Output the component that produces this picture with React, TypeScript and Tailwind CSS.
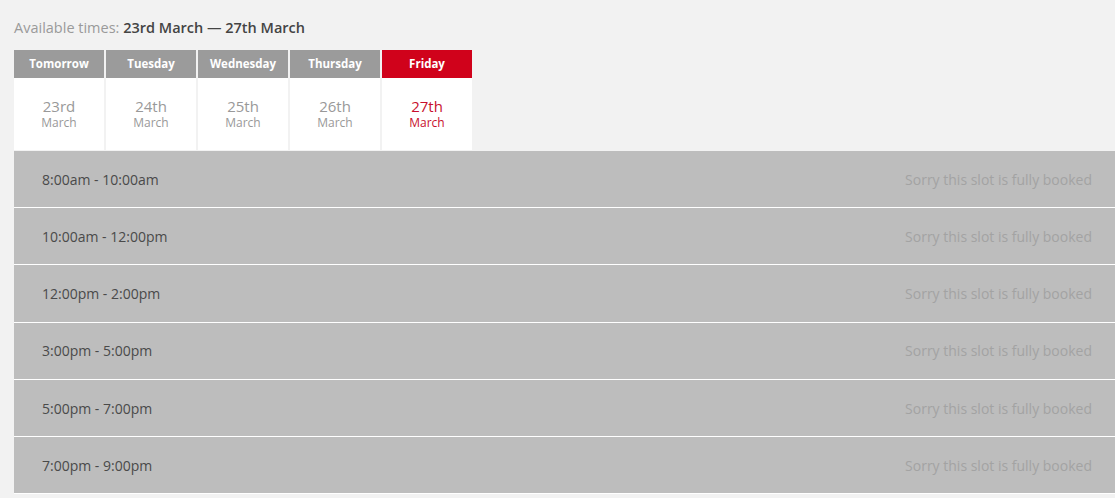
const days = [
  { name: "Tomorrow", date: "23rd", active: false },
  { name: "Tuesday", date: "24th", active: false },
  { name: "Wednesday", date: "25th", active: false },
  { name: "Thursday", date: "26th", active: false },
  { name: "Friday", date: "27th", active: true },
]

const slots = [
  "8:00am - 10:00am",
  "10:00am - 12:00pm",
  "12:00pm - 2:00pm",
  "3:00pm - 5:00pm",
  "5:00pm - 7:00pm",
  "7:00pm - 9:00pm",
]

export default function App() {
  return (
    <div className="min-h-[498px] bg-[#f2f2f2] pl-[14px] pt-[18px] font-['Open_Sans',sans-serif]">
      {/* Heading */}
      <p className="text-[14.5px] leading-[20px] text-[#9a9a9a]">
        Available times: <span className="font-semibold text-[#444]">23rd March — 27th March</span>
      </p>

      {/* Day tabs */}
      <div className="mt-[12px] flex gap-[2px]">
        {days.map((day) => (
          <div key={day.name} className="flex w-[90px] flex-col">
            <div
              className={`flex h-[28px] items-center justify-center text-[11.5px] font-bold text-white ${
                day.active ? "bg-[#d0021b]" : "bg-[#9b9b9b]"
              }`}
            >
              {day.name}
            </div>
            <div
              className={`flex h-[72px] flex-col items-center justify-center bg-white pb-px ${
                day.active ? "text-[#c8102e]" : "text-[#999]"
              }`}
            >
              <span className="text-[15px] leading-[18px]">{day.date}</span>
              <span className="text-[12px] leading-[15px]">March</span>
            </div>
          </div>
        ))}
      </div>

      {/* Time slots */}
      <div className="mt-px flex flex-col">
        {slots.map((slot) => (
          <div
            key={slot}
            className="flex h-[57.2px] items-center justify-between border-b border-white bg-[#bdbdbd] pl-[28px] pr-[23px] pt-[0.5px] text-[14px]"
          >
            <span className="text-[#4a4a4a]">{slot}</span>
            <span className="text-[#a3a3a3]">Sorry this slot is fully booked</span>
          </div>
        ))}
      </div>
    </div>
  )
}
